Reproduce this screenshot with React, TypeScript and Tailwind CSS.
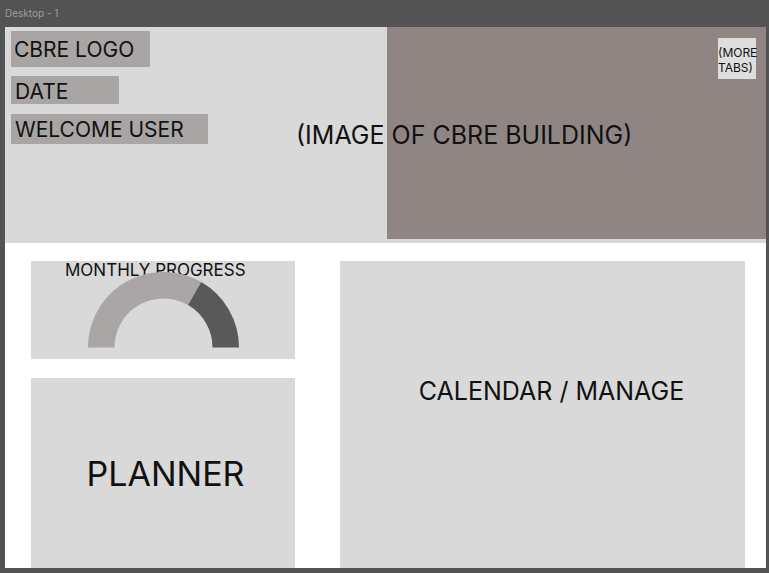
import React from "react";

function Gauge() {
  return (
    <svg width="151" height="76" viewBox="0 0 151 76" className="absolute left-[57px] top-[11px]">
      <path d="M0 75.5 A75.5 75.5 0 0 1 113.25 10.12 L100 33.06 A49 49 0 0 0 26.5 75.5 Z" fill="#aaa6a5" />
      <path d="M113.25 10.12 A75.5 75.5 0 0 1 151 75.5 L124.5 75.5 A49 49 0 0 0 100 33.06 Z" fill="#595959" />
    </svg>
  );
}

export default function App() {
  return (
    <div
      className="w-[769px] h-[573px] bg-[#535353] overflow-hidden flex flex-col"
      style={{ fontFamily: "Inter, 'Noto Sans', sans-serif" }}
    >
      <div className="h-[27px] pl-[5px] flex items-center text-[10px] text-[#9c9c9c]">Desktop - 1</div>
      <div className="ml-[5px] w-[761px] h-[541px] bg-white flex flex-col overflow-hidden">
        {/* header */}
        <div className="relative h-[216px] bg-[#d9d9d9] flex shrink-0">
          <div className="w-[382px] pl-[6px] pt-[4px] flex flex-col items-start text-[21px] text-[#111] leading-none">
            <div className="w-[139px] h-[36px] bg-[#a8a5a4] flex items-center pl-[3px] pt-[1px]">CBRE LOGO</div>
            <div className="mt-[9px] w-[108px] h-[28px] bg-[#a8a5a4] flex items-center pl-[4px] pt-[2px]">DATE</div>
            <div className="mt-[10px] w-[197px] h-[30px] bg-[#a8a5a4] flex items-center pl-[4px] pt-[1px]">WELCOME USER</div>
          </div>
          <div className="relative w-[379px] h-[212px] bg-[#8f8684]">
            <div className="absolute left-[331px] top-[11px] w-[38px] h-[41px] bg-[#dedede] pt-[7px] text-[12px] leading-[15px] text-[#111] whitespace-nowrap">
              <div>(MORE</div>
              <div>TABS)</div>
            </div>
          </div>
          <div className="absolute left-[291px] top-[96px] text-[25px] leading-none text-[#111] whitespace-nowrap">
            (IMAGE OF CBRE BUILDING)
          </div>
        </div>
        {/* content */}
        <div className="flex-1 flex pt-[18px] pl-[26px] gap-[45px] overflow-hidden">
          <div className="w-[264px] flex flex-col gap-[19px]">
            <div className="relative h-[98px] bg-[#d9d9d9] shrink-0">
              <div className="absolute left-[34px] top-[1px] text-[17px] leading-none text-[#111] whitespace-nowrap">MONTHLY PROGRESS</div>
              <Gauge />
            </div>
            <div className="flex-1 bg-[#d9d9d9] flex items-center justify-center pl-[5px] pt-[2px] text-[34px] leading-none text-[#111]">
              PLANNER
            </div>
          </div>
          <div className="w-[405px] bg-[#d9d9d9] flex justify-center pl-[18px] pt-[118px] text-[25px] leading-none text-[#111]">
            <div className="whitespace-nowrap h-fit">CALENDAR / MANAGE</div>
          </div>
        </div>
      </div>
    </div>
  );
}
